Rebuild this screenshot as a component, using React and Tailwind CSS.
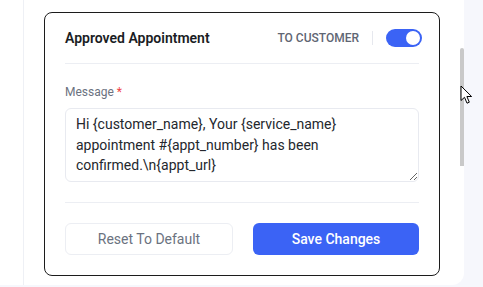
import React from 'react';

const message = 'Hi {customer_name}, Your {service_name} appointment #{appt_number} has been confirmed.\\n{appt_url}';

const Toggle = ({ on }) => (
  <div className={`w-9 h-[18px] rounded-full flex items-center px-[2px] ${on ? 'bg-[#3b63f5] justify-end' : 'bg-gray-300 justify-start'}`}>
    <div className="w-[14px] h-[14px] rounded-full bg-white" />
  </div>
);

const Cursor = () => (
  <svg className="absolute left-[460px] top-[85px]" width="13" height="20" viewBox="0 0 13 20">
    <path d="M1 1 L1 15.5 L4.5 12.3 L7 18.2 L9.3 17.2 L6.9 11.5 L11.6 11.5 Z" fill="#fff" stroke="#000" strokeWidth="1" strokeLinejoin="round" />
  </svg>
);

export default function App() {
  return (
    <div className="relative w-[483px] h-[287px] bg-[#f6f7fc] overflow-hidden" style={{ fontFamily: 'Roboto, "Liberation Sans", sans-serif' }}>
      <div className="relative w-[464px] h-[285px] bg-white rounded-br-xl flex">
        {/* left rail */}
        <div className="w-6 h-full border-r border-[#eef0f5]" />

        <div className="flex-1 pl-5 pt-3">
          {/* notification card */}
          <div className="w-[396px] border border-[#1c1c1c] rounded-lg px-5 pb-5">
            <div className="flex items-center justify-between pt-4 pb-4 border-b border-[#eceef3]">
              <h2 className="text-[14px] leading-[18px] font-semibold text-[#1a1d24]">Approved Appointment</h2>
              <div className="flex items-center -mr-[3px]">
                <span className="text-[12px] font-medium text-[#5f6673]">TO CUSTOMER</span>
                <span className="w-px h-3.5 bg-[#e6e8ee] mx-[13px]" />
                <Toggle on />
              </div>
            </div>

            <div className="pt-5 pb-5 border-b border-[#eceef3]">
              <label className="block text-[12px] leading-4 text-[#6b7280] mb-2">
                Message <span className="text-[#ef4444]">*</span>
              </label>
              <textarea
                readOnly
                rows={3}
                defaultValue={message}
                className="block w-full h-[74px] border border-[#e8eaf0] rounded-md px-[10px] py-[5px] text-[14px] leading-[20.5px] text-[#24272d] outline-none"
              />
            </div>

            <div className="flex gap-5 pt-5">
              <button className="flex-1 h-8 rounded-md border border-[#eceef3] text-[14px] text-[#6b7280]">
                Reset To Default
              </button>
              <button className="flex-1 h-8 rounded-md bg-[#3b63f5] text-[14px] font-medium text-white">
                Save Changes
              </button>
            </div>
          </div>
        </div>

        {/* scrollbar thumb */}
        <div className="absolute right-0 top-[48px] w-1 h-[118px] bg-[#c9c9c9] rounded-t-sm" />
      </div>
      <Cursor />
    </div>
  );
}
